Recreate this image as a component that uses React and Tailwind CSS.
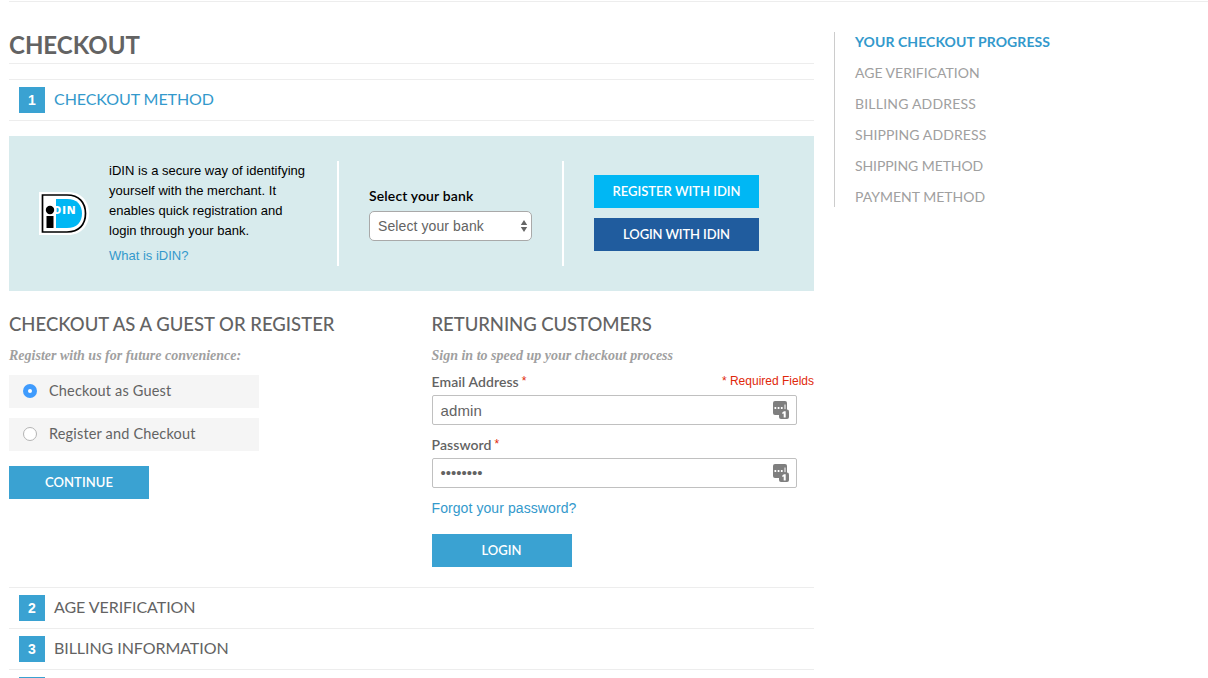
function Step({ number, title, active }) {
  return (
    <div className="flex h-[41px] items-center gap-[9px] border-t border-[#ededed] pl-2.5">
      <span className="flex size-[26px] items-center justify-center bg-[#3aa2d2] font-['Liberation_Sans',sans-serif] text-[14px] leading-none font-bold text-white">
        {number}
      </span>
      <h2 className={`-mt-[3px] text-[16px] leading-5 tracking-[-0.06px] ${active ? "text-[#3399cc]" : "text-[#636363]"}`}>
        {title}
      </h2>
    </div>
  );
}

function IdinLogo() {
  return (
    <svg className="block h-[43px] w-[50px]" viewBox="0 0 50 43">
      <path d="M0 0H29C42 0 50 9 50 21.500C50 34 42 43 29 43H0Z" fill="#fff" />
      <path d="M3.500 3H28C40 3 46.500 10.500 46.500 21.500C46.500 32.500 40 40 28 40H3.500Z" fill="#fff" stroke="#000" strokeWidth="1.700" />
      <path d="M17 7H28C38 7 43 13 43 21.500C43 30 38 36 28 36H17Z" fill="#00b7f4" />
      <text x="14.500" y="22" fill="#fff" fontFamily="Open Sans, sans-serif" fontSize="10.500" fontWeight="800" textLength="22">DIN</text>
      <circle cx="11" cy="18" r="4.200" fill="#000" />
      <rect x="7.500" y="24" width="7" height="12" fill="#000" />
    </svg>
  );
}

function VaultIcon() {
  return (
    <svg className="block h-[18px] w-4" viewBox="0 0 16 18">
      <rect width="14" height="14" rx="2" fill="#7f7f7f" />
      <path d="M1.500 6H3.200V8H1.500ZM4.700 6H6.400V8H4.700ZM7.900 6H9.600V8H7.900ZM11.500 3.500H12.500V8.300H11.500Z" fill="#fff" />
      <rect x="6" y="8.500" width="10" height="9.500" rx="2" fill="#7f7f7f" />
      <path d="M9.300 11.500L11 10.300H12.700V16.500H10.700V12.500L9.300 13Z" fill="#fff" />
    </svg>
  );
}

function Field({ label, children }) {
  return (
    <div>
      <div className="flex h-[25px] items-center gap-[3px] pb-0.5 text-[14px] leading-[15px] font-semibold tracking-[0.08px] text-[#636363]">
        <span>{label}</span>
        <span className="font-['Liberation_Sans',sans-serif] text-[12px] font-normal text-[#df280a]">*</span>
      </div>
      <div className="flex h-[30px] w-[365px] items-center justify-between rounded-[2px] border border-[#c0c0c0] bg-white pr-[7px] pl-2 font-['Liberation_Sans',sans-serif] text-[15px] text-[#636363]">
        {children}
        <VaultIcon />
      </div>
    </div>
  );
}

const progress = [
  { title: "AGE VERIFICATION", tracking: "tracking-normal" },
  { title: "BILLING ADDRESS", tracking: "tracking-[0.2px]" },
  { title: "SHIPPING ADDRESS", tracking: "tracking-[0.1px]" },
  { title: "SHIPPING METHOD", tracking: "tracking-[-0.08px]" },
  { title: "PAYMENT METHOD", tracking: "tracking-normal" },
];

export default function App() {
  return (
    <div className="h-[678px] overflow-hidden bg-white pt-px pl-[9px] font-['Lato',sans-serif] text-[#636363]">
      <div className="flex gap-5 border-t border-[#ededed] pt-[30px]">
        <main className="w-[805px] shrink-0">
          <h1 className="mb-[15px] h-8 border-b border-[#ededed] text-[24px] leading-[26px] font-bold">CHECKOUT</h1>
          <Step number="1" title="CHECKOUT METHOD" active />
          <div className="border-t border-[#ededed] pt-[15px] pb-5">
            <section className="flex h-[155px] bg-[#d8ebed] py-[25px] pl-[30px] text-black">
              <div className="flex w-[300px] gap-5 border-r-2 border-white">
                <div className="pt-[31px]">
                  <IdinLogo />
                </div>
                <div className="font-['Liberation_Sans',sans-serif] text-[13px] leading-5 tracking-[0.03px] whitespace-nowrap">
                  <p>
                    iDIN is a secure way of identifying
                    <br />
                    yourself with the merchant. It
                    <br />
                    enables quick registration and
                    <br />
                    login through your bank.
                  </p>
                  <a className="mt-[5px] block tracking-normal text-[#3399cc]">What is iDIN?</a>
                </div>
              </div>
              <div className="w-[225px] border-r-2 border-white pt-[26px] pl-[30px]">
                <div className="mb-1.5 text-[14px] leading-[18px] font-semibold tracking-[0.13px]">Select your bank</div>
                <div className="flex h-[30px] w-[163px] items-center justify-between rounded-[5px] border border-[#a9a9a9] bg-white pr-[3px] pl-2 font-['Liberation_Sans',sans-serif] text-[14px] tracking-[0.1px] text-[#636363]">
                  <span>Select your bank</span>
                  <svg className="h-3 w-2" viewBox="0 0 8 12" fill="#666">
                    <path d="M4 0L7.200 5H0.800ZM4 12L0.800 7H7.200Z" />
                  </svg>
                </div>
              </div>
              <div className="flex flex-col gap-2.5 pt-[14px] pl-[30px] text-[13px] font-semibold text-white">
                <button className="h-[33px] w-[165px] bg-[#00b7f4]">REGISTER WITH IDIN</button>
                <button className="h-[33px] w-[165px] bg-[#205c9e] tracking-[-0.13px]">LOGIN WITH IDIN</button>
              </div>
            </section>
            <div className="grid grid-cols-2 gap-10 pt-[21px]">
              <section>
                <h3 className="text-[18.5px] leading-6 font-medium whitespace-nowrap">
                  CHECKOUT AS A GUEST OR REGISTER
                </h3>
                <p className="mt-[9px] mb-[9px] font-['Liberation_Serif',serif] text-[14px] leading-[21px] font-bold text-[#a0a0a0] italic">
                  Register with us for future convenience:
                </p>
                <div className="flex w-[250px] flex-col gap-2.5 text-[14.5px] tracking-[0.17px]">
                  <label className="flex h-[33px] items-center gap-3 bg-[#f5f5f5] pl-[14px]">
                    <span className="-mt-0.5 flex size-[14px] items-center justify-center rounded-full bg-[#3f9bfd]">
                      <span className="size-1 rounded-full bg-white" />
                    </span>
                    <span className="-mt-0.5">Checkout as Guest</span>
                  </label>
                  <label className="flex h-[33px] items-center gap-3 bg-[#f5f5f5] pl-[14px]">
                    <span className="-mt-0.5 size-[14px] rounded-full border border-[#b4b4b4] bg-white" />
                    <span className="-mt-0.5">Register and Checkout</span>
                  </label>
                </div>
                <button className="mt-[15px] block h-[33px] w-[140px] bg-[#3aa2d2] text-[13px] font-semibold tracking-[0.05px] text-white">
                  CONTINUE
                </button>
              </section>
              <section>
                <h3 className="text-[18.5px] leading-6 font-medium tracking-[-0.06px]">RETURNING CUSTOMERS</h3>
                <p className="mt-[9px] font-['Liberation_Serif',serif] text-[14px] leading-[21px] font-bold text-[#a0a0a0] italic">
                  Sign in to speed up your checkout process
                </p>
                <div className="relative mt-1 flex flex-col gap-2">
                  <span className="absolute top-[3px] right-0 font-['Liberation_Sans',sans-serif] text-[12px] leading-4 text-[#df280a]">
                    * Required Fields
                  </span>
                  <Field label="Email Address">
                    <span className="mt-0.5 tracking-[0.1px]">admin</span>
                  </Field>
                  <Field label="Password">
                    <span>••••••••</span>
                  </Field>
                </div>
                <a className="mt-2.5 block font-['Liberation_Sans',sans-serif] text-[14px] leading-5 tracking-[0.08px] text-[#3399cc]">
                  Forgot your password?
                </a>
                <button className="mt-4 block h-[33px] w-[140px] bg-[#3aa2d2] text-[13px] font-semibold text-white">
                  LOGIN
                </button>
              </section>
            </div>
          </div>
          <Step number="2" title="AGE VERIFICATION" />
          <Step number="3" title="BILLING INFORMATION" />
          <Step />
        </main>
        <aside className="h-[175px] border-l border-[#ccc] pl-5 text-[14px] leading-5 text-[#a0a0a0]">
          <div className="mb-[11px] font-bold tracking-[0.08px] text-[#3399cc]">YOUR CHECKOUT PROGRESS</div>
          <ul className="flex flex-col gap-[11px]">
            {progress.map(({ title, tracking }) => (
              <li key={title} className={tracking}>
                {title}
              </li>
            ))}
          </ul>
        </aside>
      </div>
    </div>
  );
}
